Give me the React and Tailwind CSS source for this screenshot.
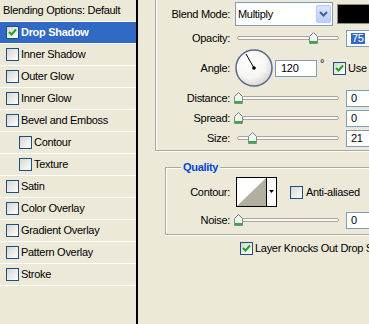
import React from 'react';

const Check = () => (
    <svg width="11" height="11" viewBox="0 0 11 11" className="block">
        <path d="M2 5 L4.5 7.5 L9 2.5" fill="none" stroke="#21A121" strokeWidth="2" />
    </svg>
);

const Box = ({ checked = false }) => (
    <div className="w-[13px] h-[13px] shrink-0 border border-[#1C5180] bg-[linear-gradient(135deg,#d6d5cf,#ffffff)] flex items-center justify-center">
        {checked && <Check />}
    </div>
);

const Thumb = () => (
    <svg width="9" height="12" viewBox="0 0 9 12" className="block">
        <path d="M0.5 4.5 L4.5 0.5 L8.5 4.5 L8.5 11.5 L0.5 11.5 Z" fill="#F4F4F0" stroke="#7C8B95" />
        <rect x="1" y="9" width="7" height="2" fill="#2DB52D" />
    </svg>
);

const Slider = ({ pos }) => (
    <div className="relative w-[102px] h-[12px] flex items-center shrink-0">
        <div className="w-full h-[4px] rounded-full border border-[#A9A89E] bg-[#F7F7F3]" />
        <div className="absolute top-0" style={{ left: pos - 4 }}>
            <Thumb />
        </div>
    </div>
);

const Field = ({ children, className = '' }) => (
    <div className={`h-[17px] border border-[#7F9DB9] bg-white flex items-center pl-[4px] ${className}`}>
        {children}
    </div>
);

const layers = [
    { name: 'Drop Shadow', checked: true, active: true },
    { name: 'Inner Shadow' },
    { name: 'Outer Glow' },
    { name: 'Inner Glow' },
    { name: 'Bevel and Emboss' },
    { name: 'Contour', sub: true },
    { name: 'Texture', sub: true },
    { name: 'Satin' },
    { name: 'Color Overlay' },
    { name: 'Gradient Overlay' },
    { name: 'Pattern Overlay' },
    { name: 'Stroke' },
];

export default function App() {
    return (
        <div className="w-[369px] h-[324px] overflow-hidden bg-[#ECE9D8] flex text-[11px] tracking-[-0.3px] text-black font-['Liberation_Sans',Tahoma,sans-serif] leading-none">

            {/* Style list */}
            <div className="w-[138px] shrink-0 border-r-2 border-black">
                <div className="h-[22px] border-b border-white flex items-center pl-[3px]">
                    Blending Options: Default
                </div>
                {layers.map((l) => (
                    <div
                        key={l.name}
                        className={`h-[22px] border-b border-white flex items-center gap-[2px] ${l.sub ? 'pl-[19px]' : 'pl-[6px]'} ${l.active ? 'bg-[#316AC5] text-white font-bold' : ''}`}
                    >
                        <Box checked={l.checked} />
                        <span>{l.name}</span>
                    </div>
                ))}
            </div>

            {/* Options */}
            <div className="flex-1 flex flex-col">

                {/* Structure */}
                <div className="ml-[17px] w-[300px] shrink-0 border-l border-b border-[#ACA899] shadow-[inset_1px_0_0_#fff,0_1px_0_#fff] pb-[2px]">
                    <div className="h-[28px] flex items-center">
                        <span className="w-[74px] text-right">Blend Mode:</span>
                        <div className="ml-[5px] w-[98px] h-[24px] border border-[#7F9DB9] bg-white flex items-center">
                            <span className="flex-1 pl-[2px]">Multiply</span>
                            <div className="w-[15px] h-[18px] mr-[1px] rounded-[2px] border border-[#B9CBF3] bg-[linear-gradient(180deg,#dbe6fd,#b9cdf8)] flex items-center justify-center">
                                <svg width="9" height="6" viewBox="0 0 9 6">
                                    <path d="M1 1 L4.5 4.5 L8 1" fill="none" stroke="#4D6185" strokeWidth="2" />
                                </svg>
                            </div>
                        </div>
                        <div className="ml-[4px] w-[40px] h-[20px] border border-[#8C8C8C] bg-black" />
                    </div>

                    <div className="h-[20px] flex items-center">
                        <span className="w-[74px] text-right">Opacity:</span>
                        <div className="ml-[7px]"><Slider pos={76} /></div>
                        <Field className="ml-[7px] w-[40px]">
                            <span className="bg-[#316AC5] text-white px-[1px]">75</span>
                        </Field>
                    </div>

                    <div className="h-[40px] flex items-center">
                        <span className="w-[74px] text-right">Angle:</span>
                        <svg width="38" height="38" viewBox="0 0 38 38" className="ml-[5px] shrink-0">
                            <defs>
                                <radialGradient id="dial" cx="0.4" cy="0.35" r="0.7">
                                    <stop offset="0" stopColor="#ffffff" />
                                    <stop offset="0.6" stopColor="#f6f6f4" />
                                    <stop offset="1" stopColor="#d4d3cc" />
                                </radialGradient>
                            </defs>
                            <circle cx="19" cy="19" r="18" fill="url(#dial)" stroke="#5A6C8C" strokeWidth="1.5" />
                            <line x1="19" y1="19" x2="11" y2="5" stroke="#000" strokeWidth="1" />
                            <circle cx="19" cy="19" r="1.8" fill="#000" />
                        </svg>
                        <Field className="ml-[2px] w-[42px] h-[16px] pl-[5px]">120</Field>
                        <span className="ml-[3px] self-start mt-[10px]">°</span>
                        <div className="ml-[9px]"><Box checked /></div>
                        <span className="ml-[2px] whitespace-nowrap">Use Global Light</span>
                    </div>

                    <div className="h-[20px] flex items-center">
                        <span className="w-[74px] text-right">Distance:</span>
                        <div className="ml-[7px]"><Slider pos={1} /></div>
                        <Field className="ml-[7px] w-[40px]">0</Field>
                    </div>
                    <div className="h-[20px] flex items-center">
                        <span className="w-[74px] text-right">Spread:</span>
                        <div className="ml-[7px]"><Slider pos={1} /></div>
                        <Field className="ml-[7px] w-[40px]">0</Field>
                    </div>
                    <div className="h-[20px] flex items-center">
                        <span className="w-[74px] text-right">Size:</span>
                        <div className="ml-[7px]"><Slider pos={15} /></div>
                        <Field className="ml-[7px] w-[40px]">21</Field>
                    </div>
                </div>

                {/* Quality */}
                <div className="relative mt-[16px] ml-[27px] w-[300px] h-[68px] shrink-0 border border-[#ACA899] shadow-[inset_1px_1px_0_#fff,0_1px_0_#fff]">
                    <span className="absolute -top-[6px] left-[15px] px-[2px] bg-[#ECE9D8] font-bold text-[#0046D5]">Quality</span>
                    <div className="mt-[8px] h-[32px] flex items-center">
                        <span className="w-[64px] text-right">Contour:</span>
                        <svg width="41" height="30" viewBox="0 0 41 30" className="ml-[6px] shrink-0">
                            <rect x="0.5" y="0.5" width="40" height="29" fill="#fff" stroke="#000" />
                            <path d="M1 29 L30 1 L30 29 Z" fill="#B3AF9F" />
                            <line x1="30.5" y1="1" x2="30.5" y2="29" stroke="#000" />
                            <path d="M33 13 L38 13 L35.5 16 Z" fill="#000" />
                        </svg>
                        <div className="ml-[13px]"><Box /></div>
                        <span className="ml-[3px] whitespace-nowrap">Anti-aliased</span>
                    </div>
                    <div className="mt-[2px] h-[20px] flex items-center">
                        <span className="w-[64px] text-right">Noise:</span>
                        <div className="ml-[7px]"><Slider pos={1} /></div>
                        <Field className="ml-[7px] w-[40px]">0</Field>
                    </div>
                </div>

                <div className="mt-[7px] ml-[102px] flex items-center gap-[2px] whitespace-nowrap">
                    <Box checked />
                    <span>Layer Knocks Out Drop Shadow</span>
                </div>
            </div>
        </div>
    );
}
